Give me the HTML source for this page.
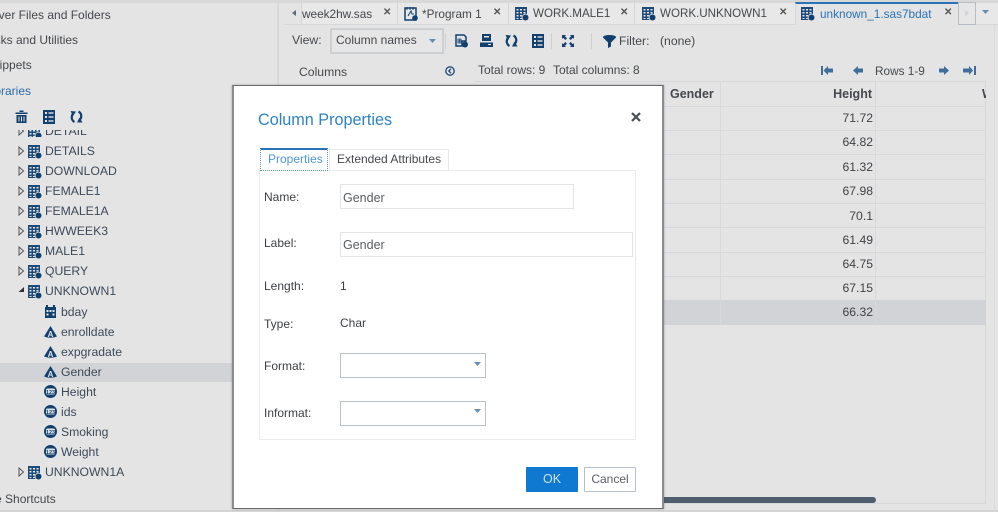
<!DOCTYPE html>
<html><head><meta charset="utf-8"><style>
html,body{margin:0;padding:0}
#p{position:relative;width:998px;height:512px;overflow:hidden;background:#e4e4e4;font-family:"Liberation Sans",sans-serif;font-size:12.2px;color:#45484c;filter:blur(.3px)}
.t{position:absolute;white-space:nowrap;line-height:16px}
.b{position:absolute;box-sizing:border-box}
svg{position:absolute;overflow:visible}
.tree{font-size:12.2px;color:#3d4a5a}
.tab{font-size:11.8px}
.num{position:absolute;left:720px;width:153px;text-align:right;line-height:16px;color:#3f4246}
.hl{position:absolute;left:663px;width:323px;height:1px;background:#d6d8db}
.x{position:absolute;font-size:10px;color:#555;line-height:14px;font-weight:bold}
.lab{position:absolute;left:264px;font-size:12px;color:#3c3f43;line-height:16px}
.ic{font-family:"Liberation Sans",sans-serif;font-weight:bold;text-anchor:middle}
</style></head><body><div id="p">
<svg width="0" height="0" style="position:absolute"><defs>
<g id="tb"><rect x="0" y="0" width="12" height="13" fill="#1d4a78"/><g fill="#e4e4e4"><rect x="1.5" y="2" width="2" height="1.5"/><rect x="5" y="2" width="2" height="1.5"/><rect x="8.5" y="2" width="2" height="1.5"/><rect x="1.5" y="5" width="2" height="1.5"/><rect x="5" y="5" width="2" height="1.5"/><rect x="8.5" y="5" width="2" height="1.5"/><rect x="1.5" y="8" width="2" height="1.5"/><rect x="5" y="8" width="2" height="1.5"/><rect x="1.5" y="11" width="2" height="1"/><rect x="5" y="11" width="2" height="1"/></g><circle cx="10.5" cy="10.500" r="3.800" fill="#e4e4e4"/><circle cx="10.500" cy="10.500" r="3" fill="#12406e"/></g>
<path id="ca" d="M6.500 0L13 10.500Q6.500 13 0 10.500Z" fill="#12406e"/>
<g id="cn"><circle cx="6.500" cy="6.500" r="6.500" fill="#12406e"/><rect x="2" y="3.500" width="9" height="6" rx="1.500" fill="#dfe3e8"/></g>
<path id="tri" d="M0 0L4.500 4L0 8Z" fill="#e4e4e4" stroke="#555" stroke-width="1"/>
<g id="ref" fill="none" stroke="#12406e" stroke-width="2.200"><path d="M4.500 12A5.200 5.200 0 0 1 3.500 3.500"/><path d="M8.500 1.500A5.200 5.200 0 0 1 9.500 10"/><path d="M.5 1L6 1.500L3 6Z" fill="#12406e" stroke="none"/><path d="M7 12.500L12.500 12.500L9.500 7.500Z" fill="#12406e" stroke="none"/></g>
<g id="lst"><rect width="12" height="14" fill="#12406e"/><g fill="#e4e4e4"><rect x="2" y="2" width="2" height="2"/><rect x="5.500" y="2.300" width="5" height="1.400"/><rect x="2" y="6" width="2" height="2"/><rect x="5.500" y="6.300" width="5" height="1.400"/><rect x="2" y="10" width="2" height="2"/><rect x="5.500" y="10.300" width="5" height="1.400"/></g></g>
</defs></svg>

<!-- top strip -->
<div class="b" style="left:0;top:0;width:998px;height:3px;background:#d8d8d8"></div>
<div class="b" style="left:277px;top:0;width:2px;height:512px;background:#d8d8d8"></div>
<div class="b" style="left:0;top:510px;width:998px;height:2px;background:#d4d4d4"></div>

<!-- left pane -->
<div class="t" style="left:-20px;top:7px;font-size:12px">Server Files and Folders</div>
<div class="t" style="left:-18px;top:32px;font-size:12px">Tasks and Utilities</div>
<div class="t" style="left:-15px;top:57px;font-size:12px">Snippets</div>
<div class="t" style="left:-15px;top:83px;color:#2a6ca8;font-size:12px">Libraries</div>

<svg style="left:15px;top:110px" width="14" height="14"><path d="M4 2V.5H8V2M0 2.500H12V4H0ZM1 5H11V13H1Z" fill="#12406e" transform="translate(.5 0)"/><path d="M4 6.500V11.500M6.500 6.500V11.500M9 6.500V11.500" stroke="#e4e4e4" stroke-width="1"/></svg>
<svg style="left:43px;top:110px" width="12" height="14"><use href="#lst"/></svg>
<svg style="left:70px;top:110px" width="14" height="14"><use href="#ref"/></svg>

<div class="b" style="left:0;top:363px;width:232px;height:19px;background:#d2d3d6"></div>

<div style="position:absolute;left:0;top:130px;width:232px;height:7px;overflow:hidden">
<div class="t tree" style="left:45px;top:-7px">DETAIL</div>
<svg style="left:28px;top:-5px" width="14" height="14"><use href="#tb"/></svg>
<svg style="left:19px;top:-3px" width="6" height="8"><use href="#tri"/></svg>
</div>

<div class="t tree" style="left:45px;top:143px">DETAILS</div>
<div class="t tree" style="left:45px;top:163px">DOWNLOAD</div>
<div class="t tree" style="left:45px;top:183px">FEMALE1</div>
<div class="t tree" style="left:45px;top:203px">FEMALE1A</div>
<div class="t tree" style="left:45px;top:223px">HWWEEK3</div>
<div class="t tree" style="left:45px;top:243px">MALE1</div>
<div class="t tree" style="left:45px;top:263px">QUERY</div>
<div class="t tree" style="left:45px;top:283px">UNKNOWN1</div>
<div class="t tree" style="left:61px;top:304px">bday</div>
<div class="t tree" style="left:61px;top:324px">enrolldate</div>
<div class="t tree" style="left:61px;top:344px">expgradate</div>
<div class="t tree" style="left:61px;top:364px">Gender</div>
<div class="t tree" style="left:61px;top:384px">Height</div>
<div class="t tree" style="left:61px;top:404px">ids</div>
<div class="t tree" style="left:61px;top:424px">Smoking</div>
<div class="t tree" style="left:61px;top:444px">Weight</div>
<div class="t tree" style="left:45px;top:464px">UNKNOWN1A</div>
<div class="t" style="left:-27px;top:491px;font-size:12px">Table Shortcuts</div>

<svg style="left:0;top:0" width="232" height="512">
<use href="#tb" x="28" y="145"/><use href="#tb" x="28" y="165"/><use href="#tb" x="28" y="185"/><use href="#tb" x="28" y="205"/><use href="#tb" x="28" y="225"/><use href="#tb" x="28" y="245"/><use href="#tb" x="28" y="265"/><use href="#tb" x="28" y="285"/><use href="#tb" x="28" y="466"/>
<use href="#tri" x="19" y="147"/><use href="#tri" x="19" y="167"/><use href="#tri" x="19" y="187"/><use href="#tri" x="19" y="207"/><use href="#tri" x="19" y="227"/><use href="#tri" x="19" y="247"/><use href="#tri" x="19" y="267"/><use href="#tri" x="19" y="468"/>
<path d="M24 287V292H18.500Z" fill="#333"/>
<g><rect x="45" y="307" width="11" height="11" fill="#12406e"/><rect x="46" y="305" width="2" height="3" fill="#12406e"/><rect x="53" y="305" width="2" height="3" fill="#12406e"/><g fill="#e4e4e4"><rect x="46.500" y="310" width="2" height="2"/><rect x="49.500" y="310" width="2" height="2"/><rect x="52.500" y="310" width="2" height="2"/><rect x="46.500" y="313.500" width="2" height="2"/><rect x="52.500" y="313.500" width="2" height="2"/></g></g>
<use href="#ca" x="44" y="326"/><text class="ic" x="50.500" y="337" font-size="8" fill="#e4e4e4">A</text>
<use href="#ca" x="44" y="346"/><text class="ic" x="50.500" y="357" font-size="8" fill="#e4e4e4">A</text>
<use href="#ca" x="44" y="366"/><text class="ic" x="50.500" y="377" font-size="8" fill="#e4e4e4">A</text>
<use href="#cn" x="44" y="385"/><text class="ic" x="50.500" y="394" font-size="5.500" fill="#12406e">123</text>
<use href="#cn" x="44" y="405"/><text class="ic" x="50.500" y="414" font-size="5.500" fill="#12406e">123</text>
<use href="#cn" x="44" y="425"/><text class="ic" x="50.500" y="434" font-size="5.500" fill="#12406e">123</text>
<use href="#cn" x="44" y="445"/><text class="ic" x="50.500" y="454" font-size="5.500" fill="#12406e">123</text>
</svg>

<!-- tab bar -->
<div class="b" style="left:284px;top:3px;width:714px;height:22px;background:#e8e8e8;border-bottom:1px solid #d8d8d8"></div>
<div class="b" style="left:284px;top:3px;width:18px;height:21px;background:#e4e4e4;border-right:1px solid #d6d6d6"></div>
<svg style="left:292px;top:10px" width="5" height="7"><path d="M4 0V6L0 3Z" fill="#5b6a7a"/></svg>
<div class="t tab" style="left:302px;top:6px">week2hw.sas</div><div class="x" style="left:383px;top:6px">✕</div>
<div class="b" style="left:397px;top:3px;width:1px;height:21px;background:#d6d6d6"></div>
<svg style="left:405px;top:7px" width="13" height="14"><rect x="0" y="1" width="11" height="12" fill="none" stroke="#12406e" stroke-width="1.500"/><path d="M2 0V3M5 0V3M8 0V3" stroke="#12406e"/><path d="M3 9L6 4L7 7H9" stroke="#12406e" fill="none"/><circle cx="10" cy="11" r="2.800" fill="#12406e"/></svg>
<div class="t tab" style="left:422px;top:6px">*Program 1</div><div class="x" style="left:493px;top:6px">✕</div>
<div class="b" style="left:508px;top:3px;width:1px;height:21px;background:#d6d6d6"></div>
<svg style="left:515px;top:7px" width="14" height="14"><use href="#tb"/></svg>
<div class="t tab" style="left:533px;top:6px;font-size:11.600px">WORK.MALE1</div><div class="x" style="left:620px;top:6px">✕</div>
<div class="b" style="left:634px;top:3px;width:1px;height:21px;background:#d6d6d6"></div>
<svg style="left:642px;top:7px" width="14" height="14"><use href="#tb"/></svg>
<div class="t tab" style="left:660px;top:6px;font-size:11.600px">WORK.UNKNOWN1</div><div class="x" style="left:779px;top:6px">✕</div>
<div class="b" style="left:795px;top:2px;width:163px;height:23px;background:#e4e4e4;border-top:2px solid #2a72b5;border-left:1px solid #d6d6d6"></div>
<svg style="left:801px;top:7px" width="14" height="14"><use href="#tb"/></svg>
<div class="t tab" style="left:820px;top:6px;color:#2a72b5">unknown_1.sas7bdat</div><div class="x" style="left:944px;top:6px">✕</div>
<div class="b" style="left:958px;top:2px;width:18px;height:23px;background:#e6e6e6;border:1px solid #b7bcc2"></div>
<svg style="left:965px;top:10px" width="5" height="7"><path d="M0 0V6L4 3Z" fill="#cfd3d8"/></svg>
<svg style="left:982px;top:10px" width="8" height="5"><path d="M0 0H7L3.500 4Z" fill="#6b8bb0"/></svg>

<!-- toolbar -->
<div class="t" style="left:292px;top:32px">View:</div>
<div class="b" style="left:330px;top:28px;width:114px;height:26px;border:2px solid #cdd0d3;background:#e6e6e6"></div>
<div class="t" style="left:336px;top:32px;font-size:12px">Column names</div>
<svg style="left:429px;top:39px" width="8" height="5"><path d="M0 0H7L3.500 4Z" fill="#6b8bb0"/></svg>
<div class="b" style="left:445px;top:33px;width:1px;height:16px;background:#cfcfcf"></div>
<svg style="left:455px;top:34px" width="14" height="14"><path d="M1 1H9L11 3V7H7V12H1Z" fill="none" stroke="#12406e" stroke-width="1.500"/><path d="M3 5H6V9H3ZM3 7H6M4.500 5V9" stroke="#12406e" fill="none" stroke-width=".8"/><circle cx="10" cy="10.500" r="3" fill="#12406e"/></svg>
<svg style="left:480px;top:34px" width="14" height="14"><path d="M2 0H11V7H2Z" fill="#12406e"/><rect x="4" y="2" width="5" height="1.500" fill="#e4e4e4"/><path d="M0 8.500H13V13H0Z" fill="#12406e"/><rect x="8" y="10" width="3" height="1" fill="#e4e4e4"/></svg>
<svg style="left:505px;top:34px" width="14" height="14"><use href="#ref"/></svg>
<svg style="left:532px;top:34px" width="12" height="14"><use href="#lst"/></svg>
<div class="b" style="left:551px;top:33px;width:1px;height:16px;background:#cfcfcf"></div>
<svg style="left:562px;top:35px" width="13" height="13"><path d="M0 4V0H4L2.800 1.200L5 3.300L3.300 5L1.200 2.800ZM12 4V0H8L9.200 1.200L7 3.300L8.700 5L10.800 2.800ZM0 8V12H4L2.800 10.800L5 8.700L3.300 7L1.200 9.200ZM12 8V12H8L9.200 10.800L7 8.700L8.700 7L10.800 9.200Z" fill="#12406e"/></svg>
<div class="b" style="left:591px;top:33px;width:1px;height:16px;background:#cfcfcf"></div>
<svg style="left:603px;top:35px" width="14" height="13"><ellipse cx="6.500" cy="2" rx="6.500" ry="2" fill="#12406e"/><path d="M0 2.500L5 7.500V13L8 11.500V7.500L13 2.500Z" fill="#12406e"/></svg>
<div class="t" style="left:619px;top:33px">Filter:</div>
<div class="t" style="left:660px;top:33px">(none)</div>

<!-- info row -->
<div class="t" style="left:299px;top:64px">Columns</div>
<svg style="left:445px;top:66px" width="11" height="11"><circle cx="5" cy="5" r="4.200" fill="none" stroke="#1d4a78" stroke-width="1.300"/><path d="M6 2.800L3.800 5L6 7.200" fill="none" stroke="#1d4a78" stroke-width="1.300"/></svg>
<div class="t" style="left:478px;top:62px;font-size:12px">Total rows: 9</div>
<div class="t" style="left:553px;top:62px;font-size:12px">Total columns: 8</div>
<svg style="left:820px;top:66px" width="160" height="10" fill="#3f6d9c">
<path d="M1 0H3V9H1ZM3.500 4.500L8 0V2.500H13V6.500H8V9Z"/>
<path d="M33 4.500L38 0V2.500H43V6.500H38V9Z"/>
<path d="M134 2.500H129V6.500H134V9L139 4.500L134 0Z" transform="translate(-10 0)"/>
<path d="M144 2.500H150V0L154 4.500L150 9V6.500H144ZM155 0H157V9H155Z" transform="translate(-1 0)"/>
</svg>
<div class="t" style="left:875px;top:63px;font-size:11.800px">Rows 1-9</div>

<!-- table -->
<div class="b" style="left:663px;top:81px;width:323px;height:423px;border-right:1px solid #d6d8db;border-bottom:1px solid #d6d8db"></div>
<div class="b" style="left:475px;top:81px;width:511px;height:1px;background:#d6d8db"></div>
<div class="hl" style="top:106px"></div><div class="hl" style="top:130px"></div><div class="hl" style="top:154px"></div><div class="hl" style="top:179px"></div><div class="hl" style="top:203px"></div><div class="hl" style="top:227px"></div><div class="hl" style="top:252px"></div><div class="hl" style="top:276px"></div><div class="hl" style="top:300px"></div>
<div class="b" style="left:663px;top:300px;width:323px;height:25px;background:#d2d3d6"></div>
<div class="b" style="left:720px;top:81px;width:1px;height:244px;background:#d6d8db"></div>
<div class="b" style="left:875px;top:81px;width:1px;height:244px;background:#d6d8db"></div>
<div class="t" style="left:670px;top:86px;font-weight:bold;font-size:12.500px;color:#45484c">Gender</div>
<div class="t" style="left:720px;width:152px;text-align:right;top:86px;font-weight:bold;font-size:12.500px;color:#45484c">Height</div>
<div class="t" style="left:982px;top:86px;font-weight:bold;font-size:12.500px;color:#45484c;width:4px;overflow:hidden">W</div>
<div class="num" style="top:110px">71.72</div><div class="num" style="top:134px">64.82</div><div class="num" style="top:159px">61.32</div><div class="num" style="top:183px">67.98</div><div class="num" style="top:208px">70.1</div><div class="num" style="top:232px">61.49</div><div class="num" style="top:256px">64.75</div><div class="num" style="top:280px">67.15</div><div class="num" style="top:304px">66.32</div>
<div class="b" style="left:650px;top:497px;width:226px;height:6px;background:#4f5f70;border-radius:0 3px 3px 0"></div>
<div class="b" style="left:994px;top:25px;width:1px;height:487px;background:#dadada"></div>

<!-- modal -->
<div class="b" style="left:232px;top:85px;width:432px;height:424px;background:#fff;border:1px solid #6a6c6f;border-left:2px solid #8a8c8f;border-right:2px solid #8a8c8f;box-shadow:0 0 2px rgba(0,0,0,.3)"></div>
<div class="t" style="left:258px;top:110px;font-size:16.200px;line-height:20px;color:#2f82c2">Column Properties</div>
<svg style="left:631px;top:112px" width="11" height="11"><path d="M1 1L9 9M9 1L1 9" stroke="#4b4e52" stroke-width="2.200"/></svg>

<div class="b" style="left:259px;top:170px;width:377px;height:270px;border:1px solid #e8eaec"></div>
<div class="b" style="left:260px;top:148px;width:68px;height:23px;background:#fff;border:1px dotted #5b93c6;border-top:2px solid #2a72b5;border-bottom:1px dotted #5b93c6"></div>
<div class="t" style="left:268px;top:151px;font-size:12px;color:#4d95d2">Properties</div>
<div class="b" style="left:329px;top:149px;width:120px;height:21px;border:1px solid #e6e8ea;border-bottom:0"></div>
<div class="t" style="left:337px;top:151px;font-size:12px;color:#45484c">Extended Attributes</div>

<div class="lab" style="top:189px">Name:</div>
<div class="b" style="left:340px;top:184px;width:234px;height:25px;border:1px solid #e2e4e7"></div>
<div class="t" style="left:343px;top:190px;font-size:12.500px;color:#5a5d61">Gender</div>
<div class="lab" style="top:235px">Label:</div>
<div class="b" style="left:340px;top:232px;width:293px;height:25px;border:1px solid #e2e4e7"></div>
<div class="t" style="left:343px;top:237px;font-size:12.500px;color:#5a5d61">Gender</div>
<div class="lab" style="top:278px">Length:</div>
<div class="t" style="left:340px;top:278px;font-size:12px;color:#3c3f43">1</div>
<div class="lab" style="top:316px">Type:</div>
<div class="t" style="left:340px;top:315px;font-size:12px;color:#3c3f43">Char</div>
<div class="lab" style="top:358px">Format:</div>
<div class="b" style="left:340px;top:353px;width:146px;height:25px;border:1px solid #b9bfc6"></div>
<svg style="left:474px;top:362px" width="8" height="5"><path d="M0 0H7L3.500 4Z" fill="#6b8bb0"/></svg>
<div class="lab" style="top:405px">Informat:</div>
<div class="b" style="left:340px;top:401px;width:146px;height:25px;border:1px solid #b9bfc6"></div>
<svg style="left:474px;top:409px" width="8" height="5"><path d="M0 0H7L3.500 4Z" fill="#6b8bb0"/></svg>

<div class="b" style="left:526px;top:467px;width:52px;height:25px;background:#0f78d0;border-radius:1px"></div>
<div class="t" style="left:526px;width:52px;text-align:center;top:471px;color:#cfe4f7;font-size:12.500px">OK</div>
<div class="b" style="left:584px;top:467px;width:52px;height:25px;border:1px solid #b9bfc6;border-radius:1px"></div>
<div class="t" style="left:584px;width:52px;text-align:center;top:471px;color:#5a5d61;font-size:12px">Cancel</div>
</div></body></html>
